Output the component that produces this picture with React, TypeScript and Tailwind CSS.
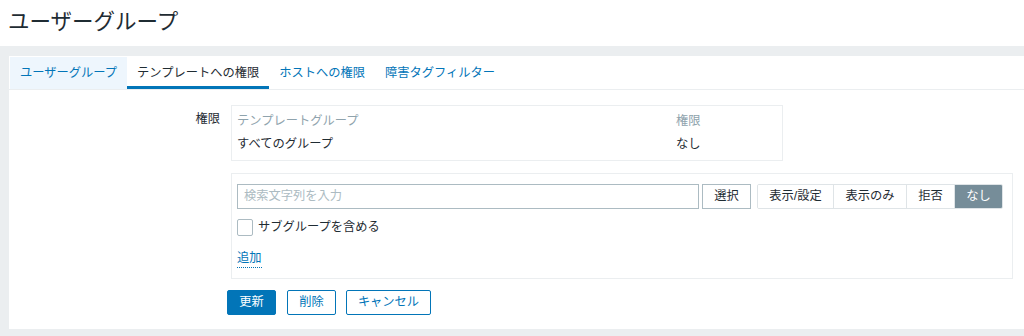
import React from "react";

const font = { fontFamily: '"Liberation Sans", "Noto Sans CJK JP", sans-serif' };

const tabs = [
  { label: "ユーザーグループ", state: "hover" },
  { label: "テンプレートへの権限", state: "active" },
  { label: "ホストへの権限", state: "" },
  { label: "障害タグフィルター", state: "" },
];

const perms = [
  { label: "表示/設定", w: "w-[75px]" },
  { label: "表示のみ", w: "w-[73px]" },
  { label: "拒否", w: "w-[48px]" },
  { label: "なし", w: "w-[48px]", on: true },
];

export default function App() {
  return (
    <div style={font} className="w-[1024px] h-[336px] overflow-hidden bg-[#ebeef0] text-[12.25px] text-[#1f2c33]">
      {/* page header */}
      <div className="h-[46px] bg-white flex items-center px-[8px]">
        <h1 className="text-[21.5px] leading-none text-[#1f2c33]">ユーザーグループ</h1>
      </div>

      <div className="mt-[10px] ml-[9px] h-[273px] bg-white pt-[1px]">
        {/* tabs */}
        <div className="flex border-b border-[#ebeef0] pl-[1px]">
          {tabs.map((t) => (
            <div
              key={t.label}
              className={
                "h-[32px] px-[10px] flex items-center " +
                (t.state === "active"
                  ? "border-b-[3px] border-[#0275b8] pt-[3px] text-[#1f2c33]"
                  : t.state === "hover"
                  ? "bg-[#eef6fd] text-[#0275b8]"
                  : "text-[#0275b8]")
              }
            >
              {t.label}
            </div>
          ))}
        </div>

        {/* form */}
        <div className="pt-[15px]">
          <div className="flex">
            <div className="w-[211px] text-right pt-[5px] text-[#1f2c33]">権限</div>
            <div className="ml-[11px] w-[552px] h-[56px] border border-[#ebeef0] px-[5px] pt-[4px]">
              <div className="grid grid-cols-[439px_1fr] leading-[23px]">
                <div className="text-[#8fa3ad]">テンプレートグループ</div>
                <div className="text-[#8fa3ad]">権限</div>
                <div>すべてのグループ</div>
                <div>なし</div>
              </div>
            </div>
          </div>

          <div className="ml-[222px] mt-[12px] w-[782px] h-[106px] border border-[#ebeef0] pt-[10px] pl-[5px] pr-[9px]">
            <div className="flex items-center h-[25px]">
              <div className="flex-1 h-[25px] border border-[#acbbc2] flex items-center px-[6px] text-[#acbbc2]">
                検索文字列を入力
              </div>
              <div className="ml-[3px] w-[49px] h-[25px] border border-[#acbbc2] flex items-center justify-center">選択</div>
              <div className="ml-[6px] flex h-[25px] border border-[#dfe4e7] rounded-[2px] overflow-hidden">
                {perms.map((p, i) => (
                  <div
                    key={p.label}
                    className={
                      p.w +
                      " flex items-center justify-center " +
                      (i > 0 ? "border-l border-[#dfe4e7] " : "") +
                      (p.on ? "bg-[#768d99] text-white" : "bg-white")
                    }
                  >
                    {p.label}
                  </div>
                ))}
              </div>
            </div>

            <div className="mt-[10px] flex items-center h-[17px]">
              <div className="w-[16px] h-[17px] border border-[#acbbc2] rounded-[2px]" />
              <span className="ml-[5px]">サブグループを含める</span>
            </div>

            <div className="mt-[13px]">
              <span className="text-[#0275b8] border-b border-dotted border-[#0275b8] pb-[2px] leading-[14px]">追加</span>
            </div>
          </div>

          <div className="ml-[218px] mt-[11px] flex">
            <button className="w-[49px] h-[25px] rounded-[2px] bg-[#0275b8] border border-[#0275b8] text-white">更新</button>
            <button className="ml-[11px] w-[49px] h-[25px] rounded-[2px] bg-white border border-[#0275b8] text-[#0275b8]">削除</button>
            <button className="ml-[10px] w-[85px] h-[25px] rounded-[2px] bg-white border border-[#0275b8] text-[#0275b8]">キャンセル</button>
          </div>
        </div>
      </div>
    </div>
  );
}
